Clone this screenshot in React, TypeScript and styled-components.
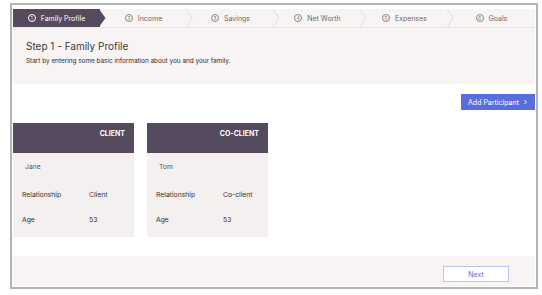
import React from "react";
import styled, { createGlobalStyle } from "styled-components";

const GlobalStyle = createGlobalStyle`
  html, body {
    margin: 0;
    padding: 0;
    background: #ffffff;
    font-family: Inter, "Liberation Sans", sans-serif;
  }
`;

const Page = styled.div`
  padding: 3px 4px 0 10px;
`;

const Frame = styled.div`
  box-sizing: border-box;
  width: 528px;
  height: 286px;
  border: 2px solid #b4b4b4;
  padding: 4px 1px 1px 1px;
  display: flex;
  flex-direction: column;
`;

const Nav = styled.div`
  display: flex;
  height: 18px;
  background: #f7f4f3;
  border-bottom: 1px solid #ebe7e5;
`;

const Step = styled.div<{ active?: boolean }>`
  position: relative;
  flex: 1;
  display: flex;
  align-items: center;
  justify-content: center;
  gap: 5px;
  font-size: 7px;
  color: ${(p) => (p.active ? "#ffffff" : "#6e6a6c")};
  background: ${(p) => (p.active ? "#554a5e" : "transparent")};
`;

const StepNum = styled.span<{ active?: boolean }>`
  box-sizing: border-box;
  width: 8px;
  height: 8px;
  border-radius: 50%;
  border: 0.8px solid ${(p) => (p.active ? "#ffffff" : "#8a8688")};
  font-size: 4.5px;
  display: flex;
  align-items: center;
  justify-content: center;
`;

const Chevron = styled.svg`
  position: absolute;
  top: 0;
  right: -6px;
  z-index: 1;
`;

const Header = styled.div`
  background: #f7f4f3;
  padding: 11px 13px 0 13px;
  height: 56px;
  box-sizing: border-box;
`;

const Title = styled.h1`
  margin: 0;
  font-size: 10px;
  font-weight: 400;
  color: #3a3a3c;
  line-height: 14px;
`;

const Subtitle = styled.p`
  margin: 4px 0 0 0;
  font-size: 6.4px;
  color: #2e2e2e;
  line-height: 9px;
`;

const Main = styled.div`
  flex: 1;
  padding-top: 10px;
  display: flex;
  flex-direction: column;
`;

const Toolbar = styled.div`
  display: flex;
  justify-content: flex-end;
`;

const PrimaryButton = styled.button`
  width: 74px;
  height: 16px;
  border: none;
  background: #5a6edb;
  color: #ffffff;
  font-family: inherit;
  font-size: 7px;
  padding: 0;
  display: flex;
  align-items: center;
  justify-content: center;
  gap: 4px;
`;

const Cards = styled.div`
  display: flex;
  gap: 13px;
  margin-top: 13px;
`;

const Card = styled.div`
  width: 121px;
  background: #f3f0ef;
`;

const CardHeader = styled.div`
  height: 30px;
  background: #554a5e;
  color: #ffffff;
  font-size: 7px;
  font-weight: 700;
  text-align: right;
  padding: 6px 9px 0 0;
  box-sizing: border-box;
  line-height: 10px;
`;

const CardBody = styled.div`
  height: 84px;
  box-sizing: border-box;
  padding: 9px 9px 0 9px;
  font-size: 6.8px;
  color: #333;
`;

const Name = styled.div`
  padding-left: 3px;
  line-height: 10px;
  height: 10px;
  margin-bottom: 18px;
  color: #555;
`;

const Row = styled.div`
  display: grid;
  grid-template-columns: 67px 1fr;
  line-height: 10px;
  margin-bottom: 15px;
`;

const Footer = styled.div`
  height: 30px;
  background: #f7f4f3;
  display: flex;
  justify-content: flex-end;
  align-items: flex-start;
  padding: 10px 26px 0 0;
  box-sizing: border-box;
`;

const SecondaryButton = styled.button`
  width: 66px;
  height: 16px;
  background: #ffffff;
  border: 1px solid #b9c3ef;
  color: #5a6edb;
  font-family: inherit;
  font-size: 7px;
  padding: 0;
`;

const steps = ["Family Profile", "Income", "Savings", "Net Worth", "Expenses", "Goals"];

const participants = [
  { role: "CLIENT", name: "Jane", relationship: "Client", age: 53 },
  { role: "CO-CLIENT", name: "Tom", relationship: "Co-client", age: 53 },
];

export default function App() {
  return (
    <>
      <GlobalStyle />
      <Page>
        <Frame>
          <Nav>
            {steps.map((label, i) => {
              const active = i === 0;
              const last = i === steps.length - 1;
              return (
                <Step key={label} active={active}>
                  <StepNum active={active}>{i + 1}</StepNum>
                  <span>{label}</span>
                  {!last && (
                    <Chevron width="7" height="18" viewBox="0 0 7 18">
                      {active ? (
                        <polygon points="0,0 6.5,9 0,18" fill="#554a5e" />
                      ) : (
                        <polyline points="0,0 6,9 0,18" fill="none" stroke="#dcd8d6" strokeWidth="0.8" />
                      )}
                    </Chevron>
                  )}
                </Step>
              );
            })}
          </Nav>
          <Header>
            <Title>Step 1 - Family Profile</Title>
            <Subtitle>Start by entering some basic information about you and your family.</Subtitle>
          </Header>
          <Main>
            <Toolbar>
              <PrimaryButton>
                Add Participant
                <svg width="5" height="6" viewBox="0 0 5 6">
                  <polyline points="1.5,1 3.5,3 1.5,5" fill="none" stroke="#fff" strokeWidth="0.9" />
                </svg>
              </PrimaryButton>
            </Toolbar>
            <Cards>
              {participants.map((p) => (
                <Card key={p.role}>
                  <CardHeader>{p.role}</CardHeader>
                  <CardBody>
                    <Name>{p.name}</Name>
                    <Row>
                      <span>Relationship</span>
                      <span>{p.relationship}</span>
                    </Row>
                    <Row>
                      <span>Age</span>
                      <span>{p.age}</span>
                    </Row>
                  </CardBody>
                </Card>
              ))}
            </Cards>
          </Main>
          <Footer>
            <SecondaryButton>Next</SecondaryButton>
          </Footer>
        </Frame>
      </Page>
    </>
  );
}
